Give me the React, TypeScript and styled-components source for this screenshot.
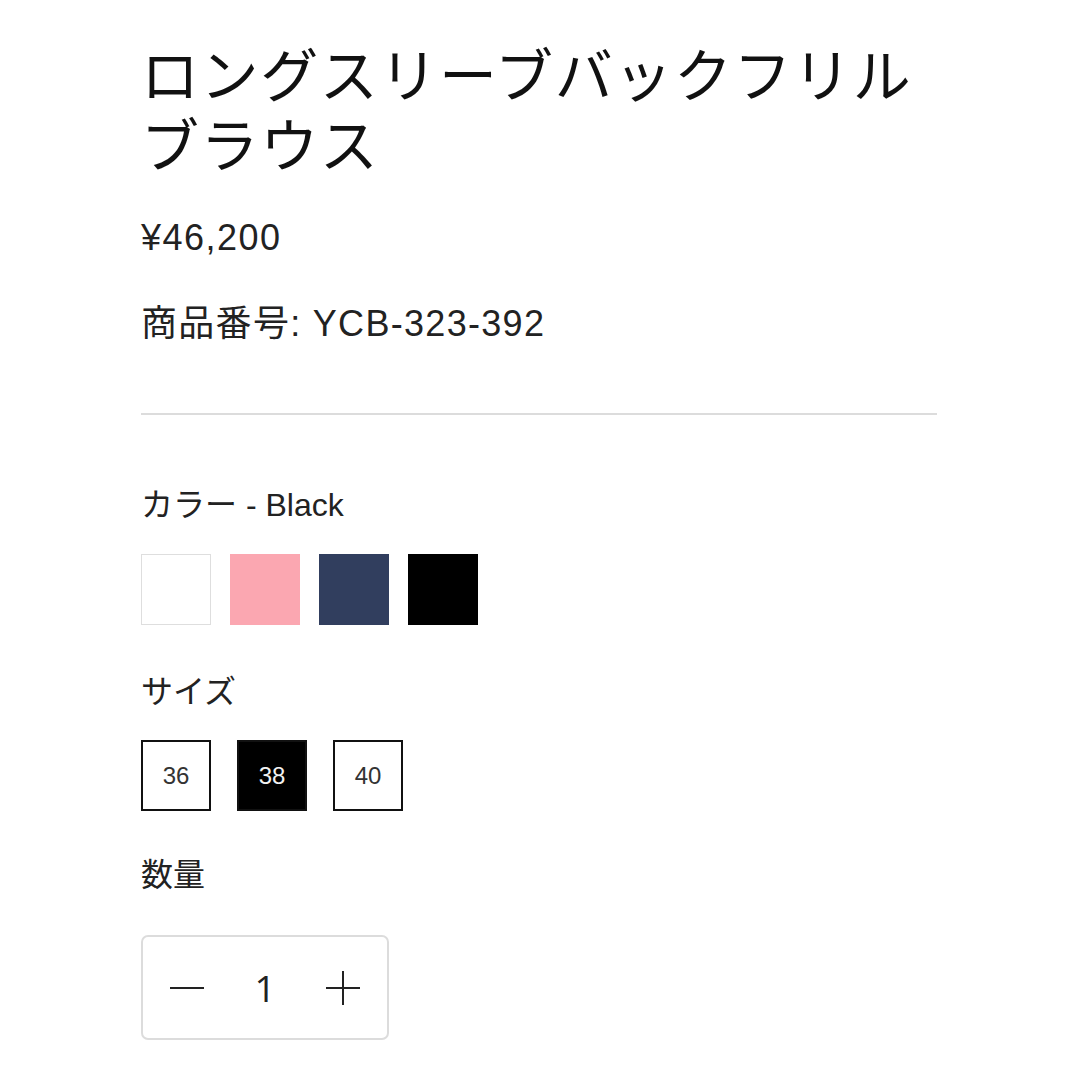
import { useState } from 'react'
import styled, { createGlobalStyle } from 'styled-components'

const GlobalStyle = createGlobalStyle`
  html, body {
    margin: 0;
    padding: 0;
    background: #fff;
  }
  body {
    font-family: 'Liberation Sans', 'Noto Sans CJK JP', sans-serif;
    color: #222;
  }
`

const textStack = `'Liberation Sans', 'Noto Sans CJK JP', sans-serif`

const Page = styled.div({
  display: 'flex',
  flexDirection: 'column',
  width: 796,
  padding: '37px 0 40px 141px',
})

const Title = styled.h1({
  margin: 0,
  fontFamily: `'Noto Sans CJK JP', sans-serif`,
  fontWeight: 400,
  fontSize: 58,
  lineHeight: '70px',
  letterSpacing: 1.6,
  color: '#111',
})

const Price = styled.div({
  marginTop: 39,
  fontFamily: textStack,
  fontSize: 36,
  lineHeight: '44px',
  letterSpacing: 1.5,
  color: '#222',
})

const Sku = styled.div({
  marginTop: 42,
  fontFamily: textStack,
  fontSize: 36,
  lineHeight: '44px',
  letterSpacing: 1.3,
  color: '#222',
})

const Divider = styled.hr({
  margin: '67px 0 0',
  border: 0,
  height: 2,
  background: '#dcdcdc',
})

const Label = styled.div<{ $top: number }>(({ $top }) => ({
  marginTop: $top,
  fontFamily: textStack,
  fontSize: 32,
  lineHeight: '40px',
  color: '#222',
}))

const SwatchRow = styled.div({
  display: 'flex',
  gap: 19,
  marginTop: 29,
})

const Swatch = styled.button<{ $color: string }>(({ $color }) => ({
  width: 70,
  height: 71,
  padding: 0,
  margin: 0,
  boxSizing: 'border-box',
  background: $color,
  border: $color === '#ffffff' ? '1px solid #dedede' : 'none',
  cursor: 'pointer',
}))

const SizeRow = styled.div({
  display: 'flex',
  gap: 26,
  marginTop: 28,
})

const SizeBox = styled.button<{ $active: boolean }>(({ $active }) => ({
  width: 70,
  height: 71,
  padding: 0,
  margin: 0,
  display: 'flex',
  alignItems: 'center',
  justifyContent: 'center',
  boxSizing: 'border-box',
  border: '2px solid #111',
  background: $active ? '#000' : '#fff',
  color: $active ? '#f2f2f2' : '#333',
  fontFamily: textStack,
  fontSize: 24,
  cursor: 'pointer',
}))

const Stepper = styled.div({
  display: 'flex',
  alignItems: 'center',
  justifyContent: 'space-between',
  boxSizing: 'border-box',
  width: 248,
  height: 105,
  marginTop: 40,
  padding: '0 27px',
  border: '2px solid #dcdcdc',
  borderRadius: 7,
})

const StepButton = styled.button({
  display: 'flex',
  alignItems: 'center',
  justifyContent: 'center',
  width: 34,
  height: 34,
  padding: 0,
  border: 0,
  background: 'none',
  cursor: 'pointer',
})

const Count = styled.span({
  fontFamily: `'Open Sans', sans-serif`,
  fontSize: 37,
  lineHeight: '40px',
  color: '#222',
})

const colors = [
  { name: 'White', value: '#ffffff' },
  { name: 'Pink', value: '#fba7b1' },
  { name: 'Navy', value: '#313e5e' },
  { name: 'Black', value: '#000000' },
]

const sizes = ['36', '38', '40']

function App() {
  const [color, setColor] = useState('Black')
  const [size, setSize] = useState('38')
  const [count, setCount] = useState(1)

  return (
    <>
      <GlobalStyle />
      <Page>
        <Title>ロングスリーブバックフリルブラウス</Title>
        <Price>¥46,200</Price>
        <Sku>商品番号: YCB-323-392</Sku>
        <Divider />

        <Label $top={70}>カラー - {color}</Label>
        <SwatchRow>
          {colors.map((c) => (
            <Swatch
              key={c.name}
              $color={c.value}
              aria-label={c.name}
              onClick={() => setColor(c.name)}
            />
          ))}
        </SwatchRow>

        <Label $top={47}>サイズ</Label>
        <SizeRow>
          {sizes.map((s) => (
            <SizeBox key={s} $active={s === size} onClick={() => setSize(s)}>
              {s}
            </SizeBox>
          ))}
        </SizeRow>

        <Label $top={44}>数量</Label>
        <Stepper>
          <StepButton aria-label="減らす" onClick={() => setCount(Math.max(1, count - 1))}>
            <svg width="34" height="34" viewBox="0 0 34 34">
              <line x1="0" y1="17" x2="34" y2="17" stroke="#222" strokeWidth="2" />
            </svg>
          </StepButton>
          <Count>{count}</Count>
          <StepButton aria-label="増やす" onClick={() => setCount(count + 1)}>
            <svg width="34" height="34" viewBox="0 0 34 34">
              <line x1="0" y1="17" x2="34" y2="17" stroke="#222" strokeWidth="2" />
              <line x1="17" y1="0" x2="17" y2="34" stroke="#222" strokeWidth="2" />
            </svg>
          </StepButton>
        </Stepper>
      </Page>
    </>
  )
}

export default App
